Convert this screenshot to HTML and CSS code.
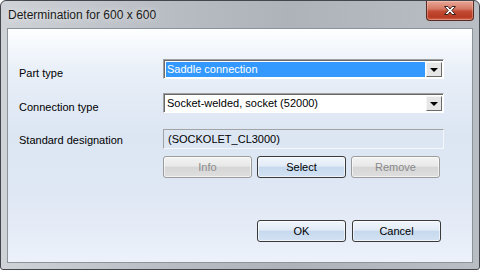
FILE: index.html
```html
<!DOCTYPE html>
<html lang="en">
<head>
    <meta charset="UTF-8">
    <title>Determination for 600 x 600</title>
    <link rel="stylesheet" href="styles.css">
</head>
<body>
    <div class="window">
        <!-- Title bar -->
        <div class="titlebar">
            <span class="title">Determination for 600 x 600</span>
            <div class="close">
                <svg width="16" height="11" viewBox="0 0 16 11">
                    <path d="M2.5 1.5 L6 1.5 L8 4 L10 1.5 L13.5 1.5 L9.8 5.5 L13.5 9.5 L10 9.5 L8 7 L6 9.5 L2.5 9.5 L6.2 5.5 Z" fill="#fff" stroke="#3a2420" stroke-width="1" stroke-linejoin="round"/>
                </svg>
            </div>
        </div>

        <!-- Dialog body -->
        <div class="client">
            <div class="row">
                <label class="label">Part type</label>
                <div class="combo">
                    <span class="combo-text selected">Saddle connection</span>
                    <span class="drop"><i class="arrow"></i></span>
                </div>
            </div>

            <div class="row row-2">
                <label class="label">Connection type</label>
                <div class="combo">
                    <span class="combo-text">Socket-welded, socket (52000)</span>
                    <span class="drop"><i class="arrow"></i></span>
                </div>
            </div>

            <div class="row row-3">
                <label class="label label-static">Standard designation</label>
                <div class="static-field">(SOCKOLET_CL3000)</div>
            </div>

            <div class="button-row">
                <button class="btn" disabled>Info</button>
                <button class="btn">Select</button>
                <button class="btn" disabled>Remove</button>
            </div>

            <div class="footer">
                <button class="btn">OK</button>
                <button class="btn">Cancel</button>
            </div>
        </div>
    </div>
</body>
</html>
```

FILE: styles.css
```css
/* Page */
body {
    margin: 0;
    padding: 0;
    font-family: 'Liberation Sans', Arial, sans-serif;
    font-size: 11px;
    color: #000;
    background-color: #ffffff;
}

/* Window frame */
.window {
    width: 480px;
    height: 270px;
    box-sizing: border-box;
    border: 1px solid #43474d;
    border-radius: 6px 6px 3px 3px;
    padding: 0 6px 6px 6px;
    background: linear-gradient(90deg, #cfd3d8 0%, #b8bdc3 35%, #aeb3b9 60%, #b9bec4 100%);
    display: flex;
    flex-direction: column;
}

.titlebar {
    height: 27px;
    display: flex;
    align-items: flex-start;
    justify-content: space-between;
}

.title {
    font-size: 12px;
    color: #1a1a1a;
    padding-top: 7px;
    padding-left: 1px;
    text-shadow: 0 0 6px rgba(255, 255, 255, 0.8);
}

.close {
    width: 46px;
    height: 19px;
    margin-right: -1px;
    border: 1px solid #5a2b22;
    border-top: none;
    border-radius: 0 0 4px 4px;
    background: linear-gradient(#e9a898 0%, #d77a66 40%, #c24a32 55%, #b83a22 85%, #d06a50 100%);
    display: flex;
    align-items: center;
    justify-content: center;
    box-shadow: inset 0 0 0 1px rgba(255, 220, 210, 0.35);
}

/* Client area */
.client {
    flex: 1;
    border: 1px solid #8c939b;
    background: linear-gradient(#fdfeff 0%, #e9eff8 18%, #dce6f3 45%, #dfe7f4 70%, #ecf1fa 100%);
    padding: 30px 0 0 11px;
}

.row {
    display: flex;
    align-items: flex-start;
}

.row-2 {
    margin-top: 13px;
}

.row-3 {
    margin-top: 15px;
}

.label {
    width: 144px;
    padding-top: 8px;
    line-height: 13px;
}

.label-static {
    padding-top: 5px;
}

/* Combo box */
.combo {
    width: 281px;
    height: 20px;
    box-sizing: border-box;
    border: 1px solid;
    border-color: #a0a0a0 #ffffff #ffffff #a0a0a0;
    background-color: #fff;
    box-shadow: inset 1px 1px 0 #696969;
    padding: 2px 1px 1px 2px;
    display: flex;
    align-items: stretch;
}

.combo-text {
    flex: 1;
    line-height: 15px;
    padding-left: 1px;
    margin-right: 1px;
}

.combo-text.selected {
    background-color: #3399ff;
    color: #fff;
}

.drop {
    width: 16px;
    box-sizing: border-box;
    border: 1px solid;
    border-color: #f6f6f6 #6a6a6a #6a6a6a #f6f6f6;
    background-color: #e6e6e6;
    display: flex;
    align-items: center;
    justify-content: center;
}

.arrow {
    width: 0;
    height: 0;
    border-left: 4px solid transparent;
    border-right: 4px solid transparent;
    border-top: 4px solid #000;
    margin-top: 1px;
}

/* Read-only field */
.static-field {
    width: 281px;
    height: 20px;
    box-sizing: border-box;
    border: 1px solid;
    border-color: #a3a3a3 #f4f6fa #f4f6fa #a3a3a3;
    padding: 3px 0 0 4px;
    line-height: 13px;
}

/* Buttons */
.button-row {
    display: flex;
    gap: 5px;
    margin-top: 7px;
    margin-left: 144px;
}

.footer {
    display: flex;
    justify-content: flex-end;
    gap: 6px;
    margin-top: 42px;
    margin-right: 31px;
}

.btn {
    width: 89px;
    height: 22px;
    font-family: 'Liberation Sans', Arial, sans-serif;
    font-size: 11px;
    color: #000;
    border: 1px solid #3a3a3a;
    border-radius: 3px;
    background: linear-gradient(#f0f5fb 0%, #e2ebf6 45%, #c6d9ee 52%, #d3e2f3 100%);
    box-shadow: inset 0 0 0 1px rgba(255, 255, 255, 0.6);
    padding: 0;
}

.btn:disabled {
    color: #8a8a8a;
    border-color: #9c9c9c;
    background: linear-gradient(#f3f3f3 0%, #e8e8e8 45%, #d6d6d6 52%, #dedede 100%);
}
```
